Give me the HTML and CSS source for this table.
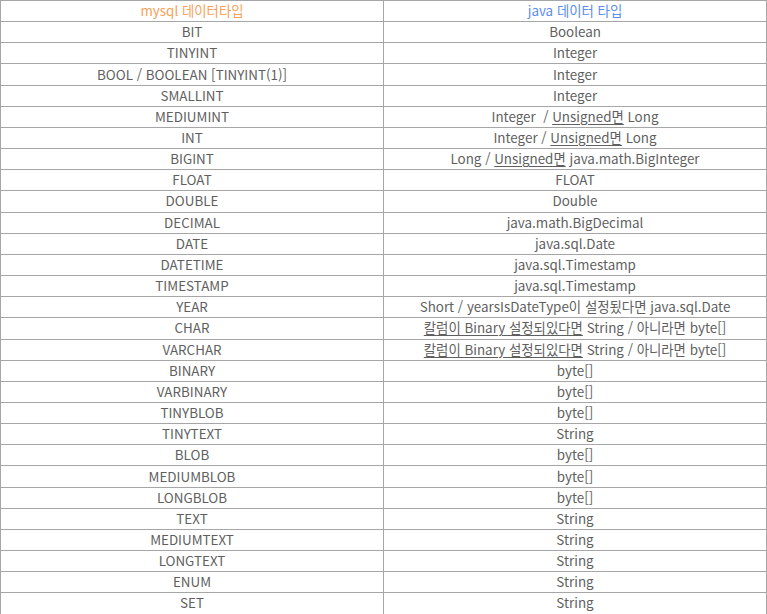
FILE: index.html
```html
<!DOCTYPE html>
<html lang="ko">
<head>
<meta charset="utf-8">
<link rel="stylesheet" href="styles.css">
</head>
<body>
<table class="types">
<thead>
<tr><th class="h-mysql">mysql 데이터타입</th><th class="h-java">java 데이터 타입</th></tr>
</thead>
<tbody>
<tr><td>BIT</td><td>Boolean</td></tr>
<tr><td>TINYINT</td><td>Integer</td></tr>
<tr><td>BOOL / BOOLEAN [TINYINT(1)]</td><td>Integer</td></tr>
<tr><td>SMALLINT</td><td>Integer</td></tr>
<tr><td>MEDIUMINT</td><td>Integer&nbsp; / <u>Unsigned면</u> Long</td></tr>
<tr><td>INT</td><td>Integer / <u>Unsigned면</u> Long</td></tr>
<tr><td>BIGINT</td><td>Long / <u>Unsigned면</u> java.math.BigInteger</td></tr>
<tr><td>FLOAT</td><td>FLOAT</td></tr>
<tr><td>DOUBLE</td><td>Double</td></tr>
<tr><td>DECIMAL</td><td>java.math.BigDecimal</td></tr>
<tr><td>DATE</td><td>java.sql.Date</td></tr>
<tr><td>DATETIME</td><td>java.sql.Timestamp</td></tr>
<tr><td>TIMESTAMP</td><td>java.sql.Timestamp</td></tr>
<tr><td>YEAR</td><td>Short / yearsIsDateType이 설정됬다면 java.sql.Date</td></tr>
<tr><td>CHAR</td><td><u>칼럼이 Binary 설정되있다면</u> String / 아니라면 byte[]</td></tr>
<tr><td>VARCHAR</td><td><u>칼럼이 Binary 설정되있다면</u> String / 아니라면 byte[]</td></tr>
<tr><td>BINARY</td><td>byte[]</td></tr>
<tr><td>VARBINARY</td><td>byte[]</td></tr>
<tr><td>TINYBLOB</td><td>byte[]</td></tr>
<tr><td>TINYTEXT</td><td>String</td></tr>
<tr><td>BLOB</td><td>byte[]</td></tr>
<tr><td>MEDIUMBLOB</td><td>byte[]</td></tr>
<tr><td>LONGBLOB</td><td>byte[]</td></tr>
<tr><td>TEXT</td><td>String</td></tr>
<tr><td>MEDIUMTEXT</td><td>String</td></tr>
<tr><td>LONGTEXT</td><td>String</td></tr>
<tr><td>ENUM</td><td>String</td></tr>
<tr><td>SET</td><td>String</td></tr>
</tbody>
</table>
</body>
</html>
```
FILE: styles.css
```css
html, body {
  margin: 0;
  padding: 0;
  background: #ffffff;
}
.types {
  width: 767px;
  height: 614px;
  border-collapse: collapse;
  table-layout: fixed;
  font-family: "Noto Sans CJK KR", "Noto Sans", sans-serif;
  font-size: 13.4px;
  color: #5f5f5f;
}
.types th, .types td {
  border: 1px solid #a6a6a6;
  padding: 0 0 1px 0;
  text-align: center;
  vertical-align: middle;
  font-weight: normal;
  line-height: 19px;
  white-space: nowrap;
}
.types tr {
  height: 21.17px;
}
.types u {
  text-decoration-thickness: 1px;
  text-underline-offset: 2px;
}
.h-mysql {
  color: #f7a25a;
}
.h-java {
  color: #5b8def;
}
```
